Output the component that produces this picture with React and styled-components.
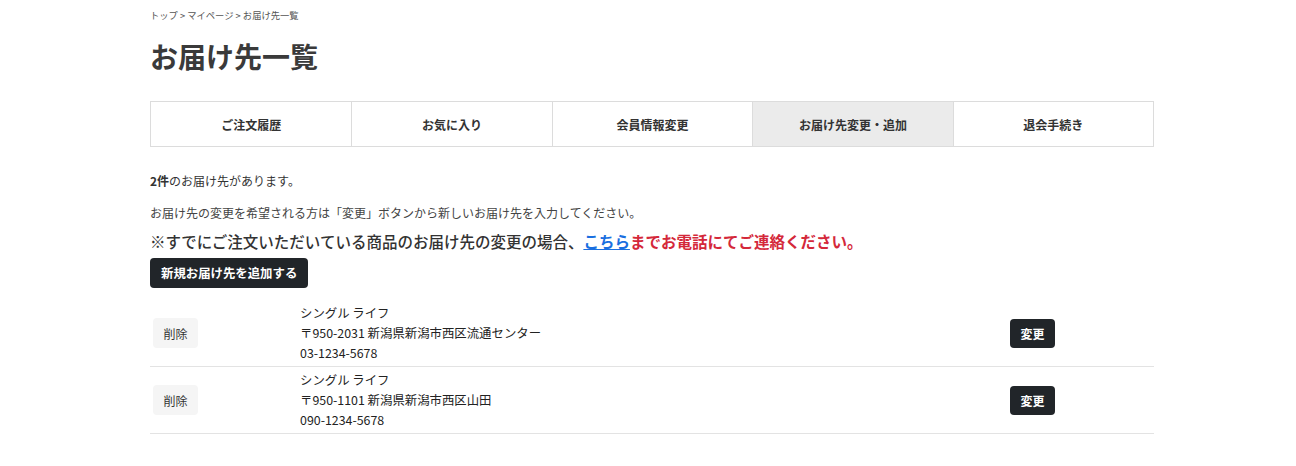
import React from 'react'
import styled, { createGlobalStyle } from 'styled-components'

const GlobalStyle = createGlobalStyle`
    body {
        margin: 0;
        background: #fff;
        font-family: "Noto Sans CJK JP", "Noto Sans", sans-serif;
        color: #333;
    }
`

const Page = styled.div`
    width: 1004px;
    margin: 0 0 0 150px;
    padding-top: 8px;
`

const Breadcrumb = styled.div`
    font-size: 9.3px;
    color: #555;
    line-height: 14px;
`

const Title = styled.h1`
    font-size: 28px;
    font-weight: 700;
    color: #3a3a3a;
    margin: 14px 0 0 0;
    line-height: 40px;
`

const Tabs = styled.div`
    display: grid;
    grid-template-columns: repeat(5, 1fr);
    margin-top: 25px;
    border: 1px solid #dcdcdc;
`

const Tab = styled.div`
    height: 44px;
    display: flex;
    align-items: center;
    justify-content: center;
    font-size: 12px;
    font-weight: 700;
    color: #333;
    background: ${props => props.active ? '#ebebeb' : '#fff'};
    border-left: ${props => props.first ? 'none' : '1px solid #dcdcdc'};
`

const Count = styled.p`
    font-size: 12px;
    margin: 25px 0 0 0;
    line-height: 18px;
    color: #333;
    b { font-weight: 700; }
`

const Note = styled.p`
    font-size: 12px;
    margin: 14px 0 0 0;
    line-height: 18px;
    color: #444;
`

const Warning = styled.p`
    font-size: 15.5px;
    font-weight: 500;
    margin: 7px 0 0 0;
    line-height: 24px;
    color: #333;
    a {
        color: #1a6fe0;
        text-decoration: underline;
        font-weight: 700;
    }
`

const Red = styled.span`
    color: #d4283a;
    font-weight: 700;
`

const AddButton = styled.button`
    margin-top: 5px;
    height: 30px;
    padding: 0 11px;
    border: none;
    border-radius: 4px;
    background: #212529;
    color: #fff;
    font-family: inherit;
    font-size: 12.4px;
    font-weight: 700;
`

const List = styled.div`
    margin-top: 12px;
`

const Row = styled.div`
    display: grid;
    grid-template-columns: 150px 1fr 144px;
    align-items: center;
    height: 66px;
    border-bottom: 1px solid #e3e3e3;
`

const DeleteButton = styled.button`
    margin-left: 3px;
    width: 45px;
    height: 30px;
    border: none;
    border-radius: 4px;
    background: #f5f5f5;
    color: #333;
    font-family: inherit;
    font-size: 12px;
`

const Address = styled.div`
    font-size: 12.4px;
    line-height: 20px;
    color: #222;
`

const ChangeButton = styled.button`
    width: 45px;
    height: 29px;
    border: none;
    border-radius: 4px;
    background: #212529;
    color: #fff;
    font-family: inherit;
    font-size: 12px;
    font-weight: 700;
`

const tabs = ['ご注文履歴', 'お気に入り', '会員情報変更', 'お届け先変更・追加', '退会手続き']

const addresses = [
    { name: 'シングル ライフ', addr: '〒950-2031 新潟県新潟市西区流通センター', tel: '03-1234-5678' },
    { name: 'シングル ライフ', addr: '〒950-1101 新潟県新潟市西区山田', tel: '090-1234-5678' },
]

const App = () => {
    return (
        <Page>
            <GlobalStyle />
            <Breadcrumb>トップ &gt; マイページ &gt; お届け先一覧</Breadcrumb>
            <Title>お届け先一覧</Title>
            <Tabs>
                {tabs.map((t, i) => (
                    <Tab key={t} first={i === 0} active={i === 3}>{t}</Tab>
                ))}
            </Tabs>
            <Count><b>2件</b>のお届け先があります。</Count>
            <Note>お届け先の変更を希望される方は「変更」ボタンから新しいお届け先を入力してください。</Note>
            <Warning>
                ※すでにご注文いただいている商品のお届け先の変更の場合、<a href="#">こちら</a><Red>までお電話にてご連絡ください。</Red>
            </Warning>
            <AddButton>新規お届け先を追加する</AddButton>
            <List>
                {addresses.map((a, i) => (
                    <Row key={i}>
                        <div><DeleteButton>削除</DeleteButton></div>
                        <Address>
                            <div>{a.name}</div>
                            <div>{a.addr}</div>
                            <div>{a.tel}</div>
                        </Address>
                        <div><ChangeButton>変更</ChangeButton></div>
                    </Row>
                ))}
            </List>
        </Page>
    )
}

export default App
